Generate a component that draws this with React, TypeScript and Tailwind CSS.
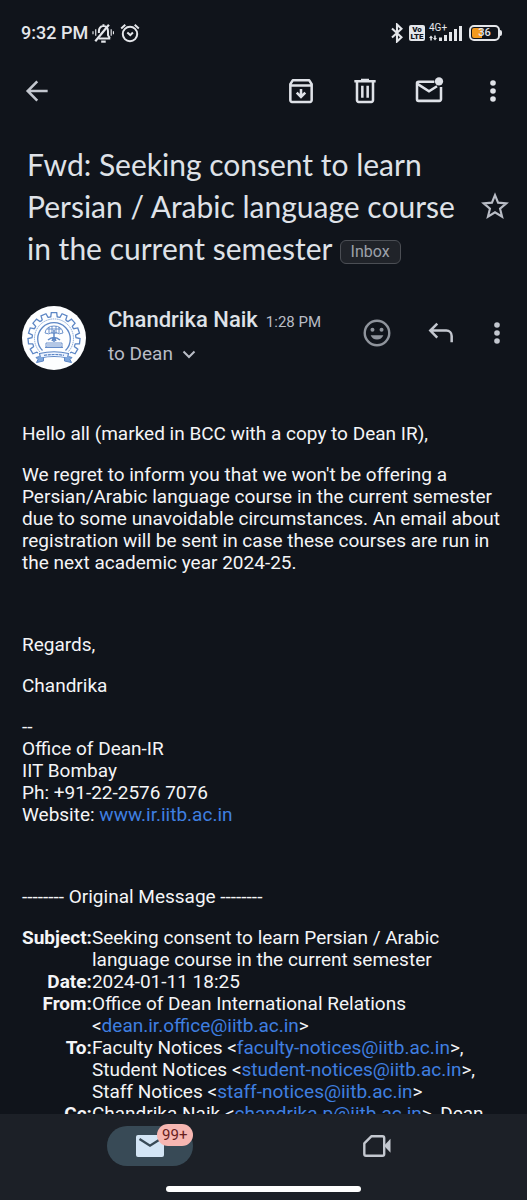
import type { ReactNode } from "react";

const GEAR_TEETH = [-120, -96, -72, -48, -24, 0, 24, 48, 72, 96, 120];

function IconButton({ label, children }: { label: string; children: ReactNode }) {
  return (
    <button type="button" aria-label={label} className="flex size-8 shrink-0 items-center justify-center">
      {children}
    </button>
  );
}

function MailLink({ address }: { address: string }) {
  return (
    <>
      &lt;
      <a href={`mailto:${address}`} className="text-[#3f7fe0]">
        {address}
      </a>
      &gt;
    </>
  );
}

function MoreIcon() {
  return (
    <svg viewBox="0 0 24 24" className="size-8" fill="currentColor">
      <circle cx="12" cy="6" r="2.1" />
      <circle cx="12" cy="12" r="2.1" />
      <circle cx="12" cy="18" r="2.1" />
    </svg>
  );
}

/* --- STATUS BAR --- */
function StatusBar() {
  return (
    <div className="flex h-6 items-center justify-between pr-[27px] pl-[21px] text-[#e4e6ea]">
      <div className="flex items-center">
        <span className="text-lg font-medium">9:32 PM</span>
        {/* muted bell */}
        <svg viewBox="0 0 24 22" className="ml-1 h-5 w-[22px]" fill="none" stroke="currentColor" strokeWidth="2.2">
          <path d="M7 17h13M7.500 11V9q0-5 5-6 5 1 5 6v4.500l2 3M12.500 3.500V1.500" />
          <path d="M3.500 20 18.500 2" strokeWidth="2.4" />
          <path d="M10 20.500h5" strokeWidth="2.4" />
          <path d="M4 7v7M1 9v3.500M21 7v7M23.500 9v3.500" strokeWidth="1.3" />
        </svg>
        {/* alarm */}
        <svg viewBox="0 0 20 20" className="ml-1.5 size-5" fill="none" stroke="currentColor" strokeWidth="2">
          <circle cx="10" cy="11" r="7.2" />
          <path d="M1.2 5.5 5.3 1.8M18.8 5.5 14.7 1.8" />
          <path d="m7.3 9.5 3 2.6 2.600-2.600" />
        </svg>
      </div>
      <div className="flex items-center">
        <svg viewBox="0 0 12 20" className="h-5 w-3" fill="none" stroke="currentColor" strokeWidth="2.1">
          <path d="m1 5.500 9.500 8.700L6 18.500v-17l4.500 4.300L1 14.500" />
        </svg>
        <span className="ml-1.5 flex h-4 w-4 flex-col items-center justify-center rounded-xs bg-[#e4e6ea] text-[8px] leading-[7px] font-black text-[#10141b]">
          <span>Vo</span>
          <span>LTE</span>
        </span>
        <span className="relative ml-1 h-5 w-[34px]">
          <svg viewBox="0 0 34 20" className="h-5 w-[34px]" fill="currentColor">
            <path d="M10 14.5h3V18h-3zM15 12h3v6h-3zM20 9h3v9h-3zM25 6h3v12h-3zM30 3h3v15h-3z" />
            <path d="M2 12.5 4 15H2.800v2.500H1.300V15H0zM6 17.500 4 15h1.200v-2.500h1.500V15H8z" />
          </svg>
          <span className="absolute top-0 left-0 text-[10px] leading-[10px]">4G+</span>
        </span>
        <span className="relative ml-1.5 flex h-4 w-[31px] items-center justify-center rounded-[5px] border-2 border-current">
          <span className="absolute inset-y-px left-px w-2.5 rounded-l-xs bg-[#f29a1f]" />
          <span className="relative text-[11px] leading-3 font-medium">36</span>
          <span className="absolute -right-1 h-1.5 w-0.5 rounded-r-sm bg-current" />
        </span>
      </div>
    </div>
  );
}

/* --- TOOLBAR --- */
function Toolbar() {
  return (
    <nav className="mt-[30px] flex items-center justify-between pr-[18px] pl-[21px] text-[#dfe2e8]">
      <IconButton label="Back">
        <svg viewBox="0 0 24 24" className="size-8 text-[#c3c7cf]" fill="none" stroke="currentColor" strokeWidth="1.9">
          <path d="M20 12H5.200M12.200 4.700 5 12l7.200 7.300" />
        </svg>
      </IconButton>
      <div className="flex items-center gap-8">
        <IconButton label="Archive">
          <svg viewBox="0 0 24 24" className="size-8" fill="none" stroke="currentColor" strokeWidth="1.9">
            <path d="M4 6.8 5.8 4h12.400L20 6.800V19a1.200 1.200 0 0 1-1.200 1.200H5.200A1.200 1.200 0 0 1 4 19zM4 7.800h16" strokeLinejoin="round" />
            <path d="M12 10.500v5.300M8.800 13.200l3.200 3.200 3.200-3.200" />
          </svg>
        </IconButton>
        <IconButton label="Delete">
          <svg viewBox="0 0 24 24" className="size-8" fill="none" stroke="currentColor" strokeWidth="1.9">
            <path d="M4 4.700h16M9 3.700h6" />
            <path d="M6 5v14a1.200 1.200 0 0 0 1.200 1.200h9.600A1.200 1.200 0 0 0 18 19V5M10 8v9M14 8v9" />
          </svg>
        </IconButton>
        <IconButton label="Mark as unread">
          <svg viewBox="0 0 24 24" className="size-8" fill="none" stroke="currentColor" strokeWidth="1.9">
            <path d="M16 5H4.200A1.200 1.200 0 0 0 3 6.200v12A1.200 1.200 0 0 0 4.200 19.400h15.600a1.200 1.200 0 0 0 1.200-1.200V9" />
            <path d="m3.300 6.700 8.700 5.500 6-3.800" />
            <circle cx="19.500" cy="4.800" r="3.100" fill="currentColor" stroke="none" />
          </svg>
        </IconButton>
        <IconButton label="More options">
          <MoreIcon />
        </IconButton>
      </div>
    </nav>
  );
}

/* --- COLLEGE SEAL --- */
function Avatar() {
  return (
    <svg viewBox="0 0 64 64" role="img" aria-label="Chandrika Naik" className="size-16 shrink-0">
      <circle cx="32" cy="32" r="32" fill="#fdfeff" />
      <g fill="none" stroke="#5c86c5">
        {GEAR_TEETH.map((angle) => (
          <path
            key={angle}
            d="M27.400 11.300 28.800 10.700 29.300 6.600h5.400l.5 4.100 1.400.6"
            strokeWidth="1.3"
            transform={`rotate(${angle} 32 32.5)`}
          />
        ))}
        <path d="M18 46a19.500 19.500 0 1 1 28 0" strokeWidth=".7" strokeDasharray="1.5 .7" />
        <path d="M20.500 44.500a16.300 16.300 0 1 1 23 0" strokeWidth="1.3" />
        <path d="M32 24v12M30 35l2-4 2 4M26 34q6-5 12 0" strokeWidth="1.5" />
        <path d="M23 27q1-7 9-7t9 7q-4 2-7-.5-2 2-4 0-3 2.500-7 .5zM25 23h14M27 21v6M30 20v8M34 20v8M37 21v6" strokeWidth=".9" />
        <path d="M24 37h16v4H24zM25 39h14M23 41.500h18" strokeWidth=".9" />
        <path d="M17.500 47.500q14.500-3.500 29 0l-1 4.500q-13.500-3-27 0z" fill="#edf4ff" strokeWidth="1.2" />
        <path d="M22 49.300q10-1.600 20 0" strokeWidth="1.2" strokeDasharray="3 .8" />
        <path d="M17.500 50.500 14 51.500l2 2-1.500 3 7-1.500v-3M46.500 50.500l3.500 1-2 2 1.500 3-7-1.500v-3" fill="#7fa7dc" strokeWidth="1" />
      </g>
    </svg>
  );
}

/* --- SENDER --- */
function Sender() {
  return (
    <section className="mt-[37px] flex items-start pr-[14px] pl-[22px]">
      <Avatar />
      <div className="ml-[22px] min-w-0 flex-1">
        <div className="flex items-baseline gap-2 whitespace-nowrap">
          <span className="text-[22px] leading-7 font-medium text-[#dfe2e8]">Chandrika Naik</span>
          <time className="text-[15px] text-[#b9bdc6]">1:28 PM</time>
        </div>
        <button type="button" className="mt-2 flex items-center gap-2 text-[19px] leading-6 text-[#b9bdc6]">
          to Dean
          <svg viewBox="0 0 16 16" className="size-4" fill="none" stroke="currentColor" strokeWidth="2">
            <path d="m2.500 5.500 5.500 5.500 5.500-5.500" />
          </svg>
        </button>
      </div>
      <div className="mt-[11px] flex items-center text-[#c3c7cf]">
        <IconButton label="Add reaction">
          <svg viewBox="0 0 24 24" className="size-8 text-[#8f949c]" fill="currentColor">
            <circle cx="12" cy="12" r="9.200" fill="none" stroke="currentColor" strokeWidth="1.8" />
            <circle cx="8.600" cy="9.500" r="1.500" />
            <circle cx="15.400" cy="9.500" r="1.500" />
            <path d="M7.200 13.700h9.600a5.200 5.200 0 0 1-9.600 0z" />
          </svg>
        </IconButton>
        <span className="ml-8 flex gap-6">
          <IconButton label="Reply">
            <svg viewBox="0 0 24 24" className="size-8" fill="none" stroke="currentColor" strokeWidth="1.9">
              <path d="M9.200 5 4 10.200l5.200 5.200M4.300 10.200H16a4 4 0 0 1 4 4V19" />
            </svg>
          </IconButton>
          <IconButton label="More message options">
            <MoreIcon />
          </IconButton>
        </span>
      </div>
    </section>
  );
}

function HeaderRow({ name, children }: { name: string; children: ReactNode }) {
  return (
    <tr className="align-top">
      <th scope="row" className="text-right font-bold whitespace-nowrap">
        {name}:
      </th>
      <td>{children}</td>
    </tr>
  );
}

/* --- MESSAGE --- */
function MessageBody() {
  return (
    <article className="mt-[53px] flex flex-col gap-[19px] px-[22px] text-[19px] leading-[22px] text-[#f4f5f7]">
      <p>Hello all (marked in BCC with a copy to Dean IR),</p>
      <p>
        We regret to inform you that we won't be offering a Persian/Arabic language course in the current semester due
        to some unavoidable circumstances. An email about registration will be sent in case these courses are run in the
        next academic year 2024-25.
      </p>
      <p className="mt-[41px]">Regards,</p>
      <p>Chandrika</p>
      <address className="not-italic">
        --
        <br />
        Office of Dean-IR
        <br />
        IIT Bombay
        <br />
        Ph: +91-22-2576 7076
        <br />
        Website:{" "}
        <a href="http://www.ir.iitb.ac.in" className="text-[#3f7fe0]">
          www.ir.iitb.ac.in
        </a>
      </address>
      <p className="mt-[41px]">-------- Original Message --------</p>
      <table className="border-collapse">
        <tbody>
          <HeaderRow name="Subject">Seeking consent to learn Persian / Arabic language course in the current semester</HeaderRow>
          <HeaderRow name="Date">2024-01-11 18:25</HeaderRow>
          <HeaderRow name="From">
            Office of Dean International Relations <MailLink address="dean.ir.office@iitb.ac.in" />
          </HeaderRow>
          <HeaderRow name="To">
            Faculty Notices <MailLink address="faculty-notices@iitb.ac.in" />, Student Notices{" "}
            <MailLink address="student-notices@iitb.ac.in" />, Staff Notices{" "}
            <MailLink address="staff-notices@iitb.ac.in" />
          </HeaderRow>
          <HeaderRow name="Cc">
            Chandrika Naik <MailLink address="chandrika.p@iitb.ac.in" />, Dean
          </HeaderRow>
        </tbody>
      </table>
    </article>
  );
}

/* --- BOTTOM NAV --- */
function BottomNav() {
  return (
    <footer className="flex shrink-0 flex-col items-center bg-[#1c2027] pt-3 pb-2">
      <div className="flex w-full px-9">
        <div className="flex flex-1 justify-center">
          <button type="button" aria-label="Mail" className="relative flex h-10 w-[86px] items-center justify-center rounded-full bg-[#384a56]">
            <svg viewBox="0 0 28 22" className="h-[22px] w-7">
              <rect width="28" height="22" rx="2" fill="#d3e5f5" />
              <path d="m3.500 4 10.500 6.700L24.500 4" fill="none" stroke="#384a56" strokeWidth="2.4" />
            </svg>
            <span className="absolute -top-0.5 right-0 flex h-[22px] w-9 items-center justify-center rounded-full bg-[#f6b6b1] text-[15px] text-[#67201d]">
              99+
            </span>
          </button>
        </div>
        <div className="flex flex-1 justify-center">
          <button type="button" aria-label="Meet" className="flex h-10 w-[86px] items-center justify-center text-[#c3c7cf]">
            <svg viewBox="0 0 28 22" className="h-[22px] w-7" fill="none" stroke="currentColor" strokeWidth="2.4">
              <path d="M8.300 1.300h11.200q1.700 0 1.700 1.700v16q0 1.700-1.700 1.700H3q-1.700 0-1.700-1.700V8.300z" strokeLinejoin="round" />
              <path d="m21 10.800 6.500-7v14z" fill="currentColor" stroke="none" />
            </svg>
          </button>
        </div>
      </div>
      <div className="mt-5 h-1.5 w-[195px] rounded-full bg-white" />
    </footer>
  );
}

export default function App() {
  return (
    <div className="flex h-screen w-full flex-col overflow-hidden bg-[#10141b] font-[Roboto,sans-serif]">
      <header className="shrink-0 pt-[21px]">
        <StatusBar />
        <Toolbar />
      </header>
      <main className="min-h-0 flex-1 overflow-y-auto pt-9 [scrollbar-width:none]">
        <section className="flex items-center justify-between pr-4 pl-[27px]">
          <h1 className="font-[Lato,sans-serif] text-[30px] leading-[42px] text-[#dfe2e8]">
            Fwd: Seeking consent to learn Persian / Arabic language course in the current semester{" "}
            <span className="inline-block h-6 rounded-md border border-[#4b4e54] bg-[#202329] px-2.5 align-middle font-[Roboto,sans-serif] text-base leading-[22px] text-[#9da1a9]">
              Inbox
            </span>
          </h1>
          <IconButton label="Star">
            <svg viewBox="0 0 24 24" className="size-8 text-[#b9bdc6]" fill="none" stroke="currentColor" strokeWidth="1.6">
              <path d="m12 3.800 2.300 5.700 6.200.5-4.700 4 1.500 6-5.300-3.300L6.700 20l1.500-6-4.700-4 6.200-.5z" />
            </svg>
          </IconButton>
        </section>
        <Sender />
        <MessageBody />
      </main>
      <BottomNav />
    </div>
  );
}
